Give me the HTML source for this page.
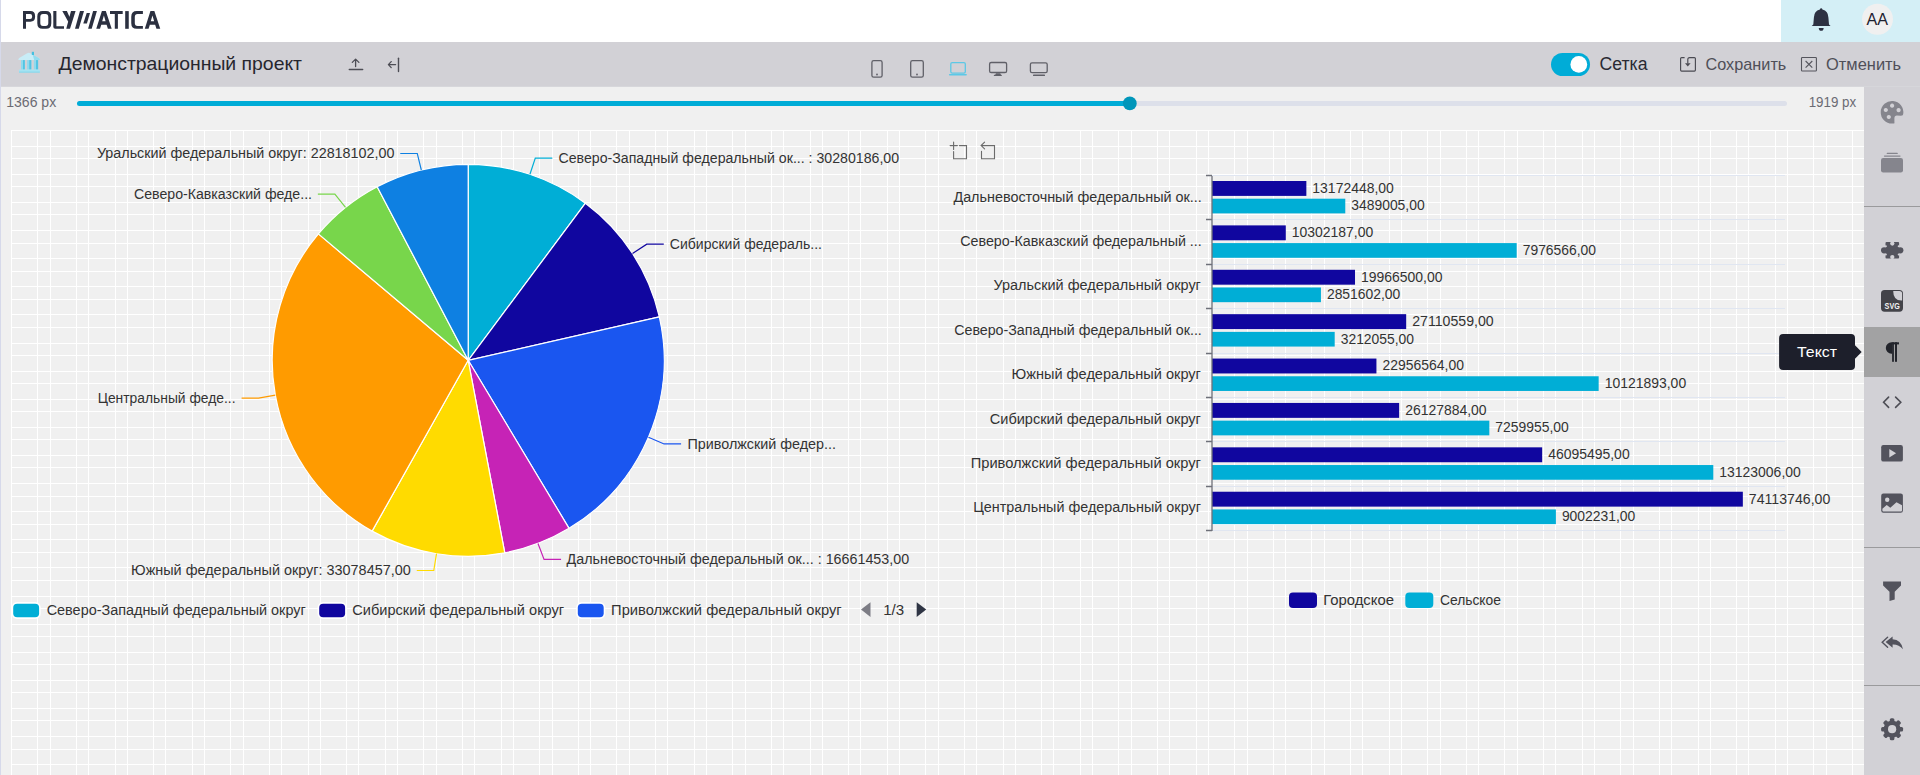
<!DOCTYPE html>
<html><head><meta charset="utf-8"><title>Polymatica</title>
<style>
html,body{margin:0;padding:0;width:1920px;height:775px;overflow:hidden;background:#f0f0f0;font-family:"Liberation Sans", sans-serif;}
svg{position:absolute;left:0;top:0;display:block}
text{font-family:"Liberation Sans", sans-serif;}
</style></head><body>
<svg width="1920" height="775" viewBox="0 0 1920 775">

<rect x="0" y="0" width="1920" height="775" fill="#f0f0f0"/>
<path d="M11.5 130V775M37.5 130V775M50.5 130V775M76.5 130V775M88.5 130V775M115.5 130V775M127.5 130V775M153.5 130V775M165.5 130V775M192.5 130V775M204.5 130V775M230.5 130V775M243.5 130V775M269.5 130V775M281.5 130V775M308.5 130V775M320.5 130V775M346.5 130V775M358.5 130V775M385.5 130V775M397.5 130V775M423.5 130V775M436.5 130V775M462.5 130V775M474.5 130V775M501.5 130V775M513.5 130V775M539.5 130V775M552.5 130V775M578.5 130V775M590.5 130V775M616.5 130V775M629.5 130V775M655.5 130V775M667.5 130V775M694.5 130V775M706.5 130V775M732.5 130V775M745.5 130V775M771.5 130V775M783.5 130V775M810.5 130V775M822.5 130V775M848.5 130V775M860.5 130V775M887.5 130V775M899.5 130V775M925.5 130V775M938.5 130V775M964.5 130V775M976.5 130V775M1003.5 130V775M1015.5 130V775M1041.5 130V775M1053.5 130V775M1080.5 130V775M1092.5 130V775M1118.5 130V775M1131.5 130V775M1157.5 130V775M1169.5 130V775M1196.5 130V775M1208.5 130V775M1234.5 130V775M1247.5 130V775M1273.5 130V775M1285.5 130V775M1311.5 130V775M1324.5 130V775M1350.5 130V775M1362.5 130V775M1389.5 130V775M1401.5 130V775M1427.5 130V775M1440.5 130V775M1466.5 130V775M1478.5 130V775M1504.5 130V775M1517.5 130V775M1543.5 130V775M1555.5 130V775M1582.5 130V775M1594.5 130V775M1620.5 130V775M1633.5 130V775M1659.5 130V775M1671.5 130V775M1698.5 130V775M1710.5 130V775M1736.5 130V775M1748.5 130V775M1775.5 130V775M1787.5 130V775M1813.5 130V775M1826.5 130V775M1852.5 130V775M11 130.5H1864M11 146.5H1864M11 158.5H1864M11 174.5H1864M11 186.5H1864M11 202.5H1864M11 214.5H1864M11 230.5H1864M11 243.5H1864M11 258.5H1864M11 271.5H1864M11 286.5H1864M11 299.5H1864M11 314.5H1864M11 327.5H1864M11 343.5H1864M11 355.5H1864M11 371.5H1864M11 383.5H1864M11 399.5H1864M11 411.5H1864M11 427.5H1864M11 439.5H1864M11 455.5H1864M11 467.5H1864M11 483.5H1864M11 496.5H1864M11 511.5H1864M11 524.5H1864M11 539.5H1864M11 552.5H1864M11 567.5H1864M11 580.5H1864M11 596.5H1864M11 608.5H1864M11 624.5H1864M11 636.5H1864M11 652.5H1864M11 664.5H1864M11 680.5H1864M11 692.5H1864M11 708.5H1864M11 720.5H1864M11 736.5H1864M11 749.5H1864M11 764.5H1864" stroke="#ffffff" stroke-width="1" fill="none" shape-rendering="crispEdges"/>
<rect x="0" y="0" width="1920" height="42" fill="#ffffff"/>
<rect x="1781" y="0" width="139" height="42" fill="#d4eff6"/>
<rect x="0" y="42" width="1920" height="44.8" fill="#d2d1d6"/>
<rect x="1864" y="86.8" width="56" height="775" fill="#d2d1d6"/>
<rect x="0" y="0" width="1" height="775" fill="#d6d9ea"/>
<g fill="#2b3040"><path fill-rule="evenodd" d="M23 28.8V11.1H30.4Q35.1 11.1 35.1 16.2V16.6Q35.1 21.8 30.4 21.8H26V28.8Z M26 13.9V18.9H30.2Q32.1 18.9 32.1 16.9V15.9Q32.1 13.9 30.2 13.9Z"/><path fill-rule="evenodd" d="M42.6 11.1H46Q51.3 11.1 51.3 16.6V23.3Q51.3 28.8 46 28.8H42.6Q37.3 28.8 37.3 23.3V16.6Q37.3 11.1 42.6 11.1Z M43 14H45.6Q48.3 14 48.3 16.9V23.1Q48.3 26 45.6 26H43Q40.3 26 40.3 23.1V16.9Q40.3 14 43 14Z"/><path d="M53.3 11.1H56.4V26.2H64V28.8H55.3Q53.3 28.8 53.3 26.8Z"/><path d="M71 11.1H75.6L70 28.8H66.25Z M62.3 11.1H66.9L70.6 19.6L69.2 23.6Z"/><path d="M80 11.1H84L78.75 28.8H75Z"/><path d="M86.7 13.1H90L86.9 23.5H83.3Z"/><path d="M93.1 11.1H96.9L91.7 28.8H88.1Z"/><path fill-rule="evenodd" d="M96.25 28.8L101.9 11.1H105.8L111.7 28.8H107.9L106.6 24.75H101.3L100.0 28.8Z M102.2 21.2H105.6L103.9 15.5Z"/><path d="M110 11.1H122.7V13.9H117.9V28.8H114.8V13.9H110Z"/><rect x="125.2" y="11.1" width="3.55" height="17.70"/><path d="M142.9 11.1V14H137.6Q134.8 14 134.8 17V23Q134.8 26 137.6 26H142.9V28.8H136.8Q131.25 28.8 131.25 23.2V16.7Q131.25 11.1 136.8 11.1Z"/><path fill-rule="evenodd" d="M144.8 28.8L150.45000000000002 11.1H154.35000000000002L160.25 28.8H156.45000000000002L155.15 24.75H149.85000000000002L148.55 28.8Z M150.75 21.2H154.15L152.45000000000002 15.5Z"/></g>
<g fill="#2d3142"><path d="M1821.2 8.2Q1822.2 8.2 1822.4 9.6Q1828.2 11 1828.4 17.5L1829 24.4L1830.6 26H1811.7L1813.3 24.4L1813.9 17.5Q1814.1 11 1819.9 9.6Q1820.1 8.2 1821.2 8.2Z"/><path d="M1818.7 27.9H1823.7Q1823.4 30.8 1821.2 30.8Q1819 30.8 1818.7 27.9Z"/></g>
<circle cx="1877.5" cy="19.3" r="15.5" fill="#f0f0f0"/>
<text x="1877.3" y="25" font-size="16.5" fill="#1f2230" text-anchor="middle" textLength="21.5" lengthAdjust="spacingAndGlyphs">AA</text>
<g><path d="M18.4 59.2Q18.6 58.4 19.6 57.8L27.2 53.2Q28.7 52.4 30.2 53.2L38.9 57.9Q39.9 58.5 39.9 59.4V60.1H18.4Z" fill="#c8edf7"/><path d="M32.6 54.5L38.9 57.9Q39.9 58.5 39.9 59.4V60.1H34.2Z" fill="#93dcef"/><rect x="31.8" y="51.8" width="2.2" height="3.2" fill="#45c0e0"/><rect x="21" y="60.1" width="3.8" height="9.6" fill="#8fdaee"/><rect x="23" y="60.1" width="1.8" height="9.6" fill="#52c4e3"/><rect x="27.1" y="60.1" width="4.2" height="9.6" fill="#8fdaee"/><rect x="29.3" y="60.1" width="2" height="9.6" fill="#52c4e3"/><rect x="33.8" y="60.1" width="4.3" height="9.6" fill="#8fdaee"/><rect x="36" y="60.1" width="2.1" height="9.6" fill="#52c4e3"/><rect x="19" y="69.6" width="20.9" height="3" rx="0.5" fill="#a6e3f2"/><rect x="19" y="71.6" width="20.9" height="1" fill="#86d6ea"/></g>
<text x="58.5" y="70" font-size="19" fill="#26262e" textLength="243.5" lengthAdjust="spacingAndGlyphs">Демонстрационный проект</text>
<g stroke="#4d4d55" stroke-width="1.3" fill="none" stroke-linecap="round" stroke-linejoin="round"><path d="M355.6 66.6V59.4M352.3 62.4L355.6 59.1L358.9 62.4"/><path d="M349.3 69.4H362.6" stroke-width="1.5"/></g>
<g stroke="#4d4d55" stroke-width="1.3" fill="none" stroke-linecap="round" stroke-linejoin="round"><path d="M395.6 64.6H388.6M391.2 61.6L388.4 64.6L391.2 67.6"/><path d="M398.5 58.3V71.5" stroke-width="1.4"/></g>
<g stroke="#606068" stroke-width="1.3" fill="none"><rect x="871.9" y="60.6" width="10.2" height="16.6" rx="1.8"/><rect x="910.7" y="60.6" width="12.6" height="16.6" rx="1.8"/><rect x="989.6" y="62.5" width="17" height="10" rx="1.6"/><rect x="1030.4" y="62.8" width="16.8" height="9.8" rx="1.6"/></g>
<g fill="#606068"><circle cx="877" cy="74.5" r="0.9"/><circle cx="917" cy="74.5" r="0.9"/><path d="M996 73.2H1000.2L1001 75H995.2Z"/><rect x="993.8" y="74.8" width="8" height="1.3" rx="0.5"/><rect x="1033" y="74.6" width="12" height="1.5" rx="0.6"/></g>
<g stroke="#5cc8e6" stroke-width="1.3" fill="none"><rect x="950.8" y="62.7" width="14.5" height="10.5" rx="1.4"/></g><rect x="948.9" y="74" width="18" height="1.6" rx="0.8" fill="#5cc8e6"/>
<rect x="1551" y="53" width="39" height="23" rx="11.5" fill="#00acd7"/><circle cx="1578.8" cy="64.4" r="8.4" fill="#ffffff"/>
<text x="1599.5" y="69.9" font-size="17.5" fill="#2a2a33" textLength="48" lengthAdjust="spacingAndGlyphs">Сетка</text>
<g stroke="#4a4a52" stroke-width="1.15" fill="none" stroke-linejoin="round"><path d="M1684.6 57.6H1681.6Q1680.6 57.6 1680.6 58.6V70.1Q1680.6 71.1 1681.6 71.1H1694.4Q1695.4 71.1 1695.4 70.1V58.6Q1695.4 57.6 1694.4 57.6H1689.6Q1687.8 57.6 1687.8 59.6V63.4"/></g><path d="M1685 63.2H1690.6L1687.8 66.6Z" fill="#4a4a52"/>
<text x="1705.5" y="69.8" font-size="17" fill="#4f4f58" textLength="80.8" lengthAdjust="spacingAndGlyphs">Сохранить</text>
<g stroke="#55555d" stroke-width="1.1" fill="none"><rect x="1801.5" y="57.5" width="14.9" height="13.5" rx="0.8"/><path d="M1805.6 61L1812.3 67.6M1812.3 61L1805.6 67.6"/></g>
<text x="1826" y="69.8" font-size="17" fill="#4f4f58" textLength="75.2" lengthAdjust="spacingAndGlyphs">Отменить</text>
<text x="6.2" y="107" font-size="14" fill="#6b6b73" textLength="50" lengthAdjust="spacingAndGlyphs">1366 px</text>
<text x="1808.7" y="107" font-size="14" fill="#6b6b73" textLength="47.5" lengthAdjust="spacingAndGlyphs">1919 px</text>
<rect x="77" y="101" width="1710" height="5" rx="2.5" fill="#dde0ea"/>
<rect x="77" y="101" width="1053" height="5" rx="2.5" fill="#00acd7"/>
<circle cx="1129.8" cy="103.4" r="6.9" fill="#0096ba"/>
<rect x="1864" y="327" width="56" height="50" fill="#a2a2a3"/>
<rect x="1864" y="206" width="56" height="1" fill="#9a9a9c"/>
<rect x="1864" y="547" width="56" height="1" fill="#9a9a9c"/>
<rect x="1864" y="685" width="56" height="1" fill="#9a9a9c"/>
<path fill="#85858d" fill-rule="evenodd" d="M1894.2 123.4Q1893.3 123.6 1892.3 123.6A11.3 11.3 0 1 1 1903.2 114Q1903.4 115.8 1901 115.8Q1899 115.6 1896.9 115.6Q1894.4 115.6 1894.4 118.2V121.8Q1894.6 123.3 1894.2 123.4Z M1892.1 103.6a2.1 2.1 0 1 0 0.01 0Z M1885.8 107.9a2.1 2.1 0 1 0 0.01 0Z M1898.6 108a2.1 2.1 0 1 0 0.01 0Z M1888.8 114.9a2.1 2.1 0 1 0 0.01 0Z"/>
<g fill="#85858d"><rect x="1881" y="158" width="22" height="14.4" rx="2.2"/><rect x="1883.9" y="155.4" width="16.7" height="1.3" rx="0.6"/><rect x="1886.7" y="152.7" width="11.1" height="1.3" rx="0.6"/></g>
<g fill="#54545e"><rect x="1885.5" y="242.1" width="13.6" height="16.5" rx="1"/><circle cx="1884.1" cy="250.35" r="3.1"/><circle cx="1900.3" cy="250.35" r="3.1"/></g><g fill="#d2d1d6"><circle cx="1892.3" cy="243.6" r="2.15"/><circle cx="1892.3" cy="257.1" r="2.15"/><circle cx="1885.9" cy="246.3" r="1.0"/><circle cx="1885.9" cy="254.4" r="1.0"/><circle cx="1898.7" cy="246.3" r="1.0"/><circle cx="1898.7" cy="254.4" r="1.0"/></g>
<rect x="1881" y="290" width="22" height="21.7" rx="3.6" fill="#434349"/><path d="M1893.2 290.9H1899.4Q1902.1 290.9 1902.1 293.6V300.4Q1893.2 300.8 1893.2 290.9Z" fill="#d2d1d6"/><text x="1892.2" y="309.3" font-size="8.6" font-weight="bold" fill="#f2f2f2" text-anchor="middle" textLength="15.2" lengthAdjust="spacingAndGlyphs">SVG</text>
<g fill="#22242b"><path d="M1892.2 342.3V353.7H1891.5A5.7 5.7 0 0 1 1891.5 342.3Z"/><rect x="1892.1" y="342.3" width="1.8" height="19.5"/><rect x="1895" y="342.3" width="2" height="19.5"/><rect x="1892.1" y="342.3" width="6.9" height="2.1"/></g>
<path d="M1888.6 397.1L1883.6 402.2L1888.6 407.4M1895.6 397.1L1900.8 402.2L1895.6 407.4" stroke="#4d4d55" stroke-width="1.6" fill="none" stroke-linecap="round" stroke-linejoin="miter"/>
<rect x="1881.2" y="445" width="21.7" height="16.6" rx="2.2" fill="#53535d"/><path d="M1889.3 449L1896.1 453.2L1889.3 457.4Z" fill="#d2d1d6"/>
<rect x="1881.2" y="493.6" width="21.7" height="19.1" rx="2.2" fill="#53535d"/><circle cx="1887.2" cy="499.7" r="2.2" fill="#d2d1d6"/><path d="M1882.4 508.8L1886.7 505.1L1890.3 507.8L1896.5 502.2L1902 505.3V510.6Q1902 511.6 1901 511.6H1883.4Q1882.4 511.6 1882.4 510.6Z" fill="#d2d1d6"/>
<path fill="#53535d" d="M1883.1 581.6H1901V585.5L1894.7 591.8V599.4L1889.5 600.9V591.8L1883.1 585.5Z"/>
<path d="M1887.6 637.3L1882.2 642.2L1887.6 647.3" stroke="#53535d" stroke-width="1.4" fill="none" stroke-linecap="round"/><path fill="#53535d" d="M1885.6 642.1L1892.6 636.6V639.3Q1901.2 639.8 1903 649.2Q1899 644.3 1892.6 644.5V647.8Z"/>
<g fill="#53535d"><circle cx="1892.1" cy="729.2" r="8.5"/><rect x="1889.8" y="718.2" width="4.6" height="6" rx="1.5" transform="rotate(0 1892.1 729.2)"/><rect x="1889.8" y="718.2" width="4.6" height="6" rx="1.5" transform="rotate(45 1892.1 729.2)"/><rect x="1889.8" y="718.2" width="4.6" height="6" rx="1.5" transform="rotate(90 1892.1 729.2)"/><rect x="1889.8" y="718.2" width="4.6" height="6" rx="1.5" transform="rotate(135 1892.1 729.2)"/><rect x="1889.8" y="718.2" width="4.6" height="6" rx="1.5" transform="rotate(180 1892.1 729.2)"/><rect x="1889.8" y="718.2" width="4.6" height="6" rx="1.5" transform="rotate(225 1892.1 729.2)"/><rect x="1889.8" y="718.2" width="4.6" height="6" rx="1.5" transform="rotate(270 1892.1 729.2)"/><rect x="1889.8" y="718.2" width="4.6" height="6" rx="1.5" transform="rotate(315 1892.1 729.2)"/></g><circle cx="1892.1" cy="729.2" r="4.1" fill="#d2d1d6"/>
<g><path d="M468.2 360.3L468.20 164.30A196 196 0 0 1 585.40 203.20Z" fill="#00aed6" stroke="#ffffff" stroke-width="1.2" stroke-linejoin="round"/><path d="M468.2 360.3L585.40 203.20A196 196 0 0 1 659.34 316.93Z" fill="#10069f" stroke="#ffffff" stroke-width="1.2" stroke-linejoin="round"/><path d="M468.2 360.3L659.34 316.93A196 196 0 0 1 569.05 528.36Z" fill="#1a56f0" stroke="#ffffff" stroke-width="1.2" stroke-linejoin="round"/><path d="M468.2 360.3L569.05 528.36A196 196 0 0 1 504.79 552.85Z" fill="#c623b6" stroke="#ffffff" stroke-width="1.2" stroke-linejoin="round"/><path d="M468.2 360.3L504.79 552.85A196 196 0 0 1 372.11 531.13Z" fill="#ffdb00" stroke="#ffffff" stroke-width="1.2" stroke-linejoin="round"/><path d="M468.2 360.3L372.11 531.13A196 196 0 0 1 318.40 233.90Z" fill="#ff9b00" stroke="#ffffff" stroke-width="1.2" stroke-linejoin="round"/><path d="M468.2 360.3L318.40 233.90A196 196 0 0 1 377.17 186.72Z" fill="#78d64b" stroke="#ffffff" stroke-width="1.2" stroke-linejoin="round"/><path d="M468.2 360.3L377.17 186.72A196 196 0 0 1 468.20 164.30Z" fill="#0e80e2" stroke="#ffffff" stroke-width="1.2" stroke-linejoin="round"/></g>
<g><path d="M529.94 174.28L535.30 158.14L552.30 158.14" stroke="#00aed6" stroke-width="1.2" fill="none"/><text x="558.50" y="163.09" font-size="15.3" fill="#333333" textLength="340.60" lengthAdjust="spacingAndGlyphs">Северо-Западный федеральный ок... : 30280186,00</text><path d="M632.52 253.46L646.77 244.20L663.77 244.20" stroke="#10069f" stroke-width="1.2" fill="none"/><text x="669.80" y="249.15" font-size="15.3" fill="#333333" textLength="152.17" lengthAdjust="spacingAndGlyphs">Сибирский федераль...</text><path d="M648.45 437.28L664.09 443.95L681.09 443.95" stroke="#1a56f0" stroke-width="1.2" fill="none"/><text x="687.50" y="448.90" font-size="15.3" fill="#333333" textLength="148.49" lengthAdjust="spacingAndGlyphs">Приволжский федер...</text><path d="M538.00 543.45L544.06 559.34L561.06 559.34" stroke="#c623b6" stroke-width="1.2" fill="none"/><text x="566.60" y="564.29" font-size="15.3" fill="#333333" textLength="342.57" lengthAdjust="spacingAndGlyphs">Дальневосточный федеральный ок... : 16661453,00</text><path d="M436.53 553.72L433.78 570.50L416.78 570.50" stroke="#ffdb00" stroke-width="1.2" fill="none"/><text x="131.10" y="575.45" font-size="15.3" fill="#333333" textLength="279.62" lengthAdjust="spacingAndGlyphs">Южный федеральный округ: 33078457,00</text><path d="M275.32 395.15L258.59 398.17L241.59 398.17" stroke="#ff9b00" stroke-width="1.2" fill="none"/><text x="97.70" y="403.12" font-size="15.3" fill="#333333" textLength="137.81" lengthAdjust="spacingAndGlyphs">Центральный феде...</text><path d="M345.50 207.46L334.86 194.20L317.86 194.20" stroke="#78d64b" stroke-width="1.2" fill="none"/><text x="134.00" y="199.15" font-size="15.3" fill="#333333" textLength="177.99" lengthAdjust="spacingAndGlyphs">Северо-Кавказский феде...</text><path d="M421.33 169.99L417.26 153.48L400.26 153.48" stroke="#0e80e2" stroke-width="1.2" fill="none"/><text x="96.90" y="158.43" font-size="15.3" fill="#333333" textLength="297.49" lengthAdjust="spacingAndGlyphs">Уральский федеральный округ: 22818102,00</text></g>
<rect x="11.6" y="602.1" width="29.1" height="16.8" rx="5.5" fill="#ffffff"/>
<rect x="13.2" y="603.7" width="25.9" height="13.6" rx="4" fill="#00aed6"/>
<text x="46.70" y="614.80" font-size="15.3" fill="#333333" textLength="259.07" lengthAdjust="spacingAndGlyphs">Северо-Западный федеральный округ</text>
<rect x="317.59999999999997" y="602.1" width="29.1" height="16.8" rx="5.5" fill="#ffffff"/>
<rect x="319.2" y="603.7" width="25.9" height="13.6" rx="4" fill="#10069f"/>
<text x="352.30" y="614.80" font-size="15.3" fill="#333333" textLength="211.80" lengthAdjust="spacingAndGlyphs">Сибирский федеральный округ</text>
<rect x="576.1999999999999" y="602.1" width="29.1" height="16.8" rx="5.5" fill="#ffffff"/>
<rect x="577.8" y="603.7" width="25.9" height="13.6" rx="4" fill="#1a56f0"/>
<text x="611.10" y="614.80" font-size="15.3" fill="#333333" textLength="230.53" lengthAdjust="spacingAndGlyphs">Приволжский федеральный округ</text>
<path d="M861 609.6L870.5 602.3V617Z" fill="#7d7d85"/>
<path d="M926.2 609.6L916.7 602.3V617Z" fill="#2f3544"/>
<text x="883.20" y="614.80" font-size="15.3" fill="#333333" textLength="21.00" lengthAdjust="spacingAndGlyphs">1/3</text>
<g stroke="#6b6b6b" stroke-width="1.1" fill="none" stroke-linecap="round" stroke-linejoin="miter"><path d="M953.6 142.1V149.4M950.1 145.6H957.4M959.4 145.6H966.5V158.7H953.6V151.5"/><path d="M984.6 142.2L981.1 145.6L984.6 148.8M981.2 145.6H994.5V158.7H981.5V151.3"/></g>
<g><path d="M1212.0 175.5H1785" stroke="#e0e6f1" stroke-width="1"/><path d="M1212.0 219.5H1785" stroke="#e0e6f1" stroke-width="1"/><path d="M1212.0 264.5H1785" stroke="#e0e6f1" stroke-width="1"/><path d="M1212.0 308.5H1785" stroke="#e0e6f1" stroke-width="1"/><path d="M1212.0 353.5H1785" stroke="#e0e6f1" stroke-width="1"/><path d="M1212.0 397.5H1785" stroke="#e0e6f1" stroke-width="1"/><path d="M1212.0 441.5H1785" stroke="#e0e6f1" stroke-width="1"/><path d="M1212.0 486.5H1785" stroke="#e0e6f1" stroke-width="1"/><rect x="1212.0" y="181.00" width="94.35" height="14.9" fill="#10069f"/><rect x="1212.0" y="198.70" width="133.28" height="14.7" fill="#00aed6"/><text x="1312.35" y="192.85" font-size="15.3" fill="#333333" textLength="81.49" lengthAdjust="spacingAndGlyphs">13172448,00</text><text x="1351.28" y="210.45" font-size="15.3" fill="#333333" textLength="73.38" lengthAdjust="spacingAndGlyphs">3489005,00</text><text x="953.40" y="201.69" font-size="15.3" fill="#333333" textLength="248.40" lengthAdjust="spacingAndGlyphs">Дальневосточный федеральный ок...</text><rect x="1212.0" y="225.39" width="73.79" height="14.9" fill="#10069f"/><rect x="1212.0" y="243.09" width="304.70" height="14.7" fill="#00aed6"/><text x="1291.79" y="237.24" font-size="15.3" fill="#333333" textLength="81.49" lengthAdjust="spacingAndGlyphs">10302187,00</text><text x="1522.70" y="254.84" font-size="15.3" fill="#333333" textLength="73.38" lengthAdjust="spacingAndGlyphs">7976566,00</text><text x="960.20" y="246.08" font-size="15.3" fill="#333333" textLength="241.58" lengthAdjust="spacingAndGlyphs">Северо-Кавказский федеральный ...</text><rect x="1212.0" y="269.78" width="143.01" height="14.9" fill="#10069f"/><rect x="1212.0" y="287.48" width="108.93" height="14.7" fill="#00aed6"/><text x="1361.01" y="281.63" font-size="15.3" fill="#333333" textLength="81.49" lengthAdjust="spacingAndGlyphs">19966500,00</text><text x="1326.93" y="299.23" font-size="15.3" fill="#333333" textLength="73.38" lengthAdjust="spacingAndGlyphs">2851602,00</text><text x="993.40" y="290.47" font-size="15.3" fill="#333333" textLength="207.49" lengthAdjust="spacingAndGlyphs">Уральский федеральный округ</text><rect x="1212.0" y="314.17" width="194.18" height="14.9" fill="#10069f"/><rect x="1212.0" y="331.87" width="122.70" height="14.7" fill="#00aed6"/><text x="1412.18" y="326.02" font-size="15.3" fill="#333333" textLength="81.50" lengthAdjust="spacingAndGlyphs">27110559,00</text><text x="1340.70" y="343.62" font-size="15.3" fill="#333333" textLength="73.38" lengthAdjust="spacingAndGlyphs">3212055,00</text><text x="954.20" y="334.87" font-size="15.3" fill="#333333" textLength="247.62" lengthAdjust="spacingAndGlyphs">Северо-Западный федеральный ок...</text><rect x="1212.0" y="358.56" width="164.43" height="14.9" fill="#10069f"/><rect x="1212.0" y="376.26" width="386.66" height="14.7" fill="#00aed6"/><text x="1382.43" y="370.41" font-size="15.3" fill="#333333" textLength="81.49" lengthAdjust="spacingAndGlyphs">22956564,00</text><text x="1604.66" y="388.01" font-size="15.3" fill="#333333" textLength="81.49" lengthAdjust="spacingAndGlyphs">10121893,00</text><text x="1011.50" y="379.25" font-size="15.3" fill="#333333" textLength="189.41" lengthAdjust="spacingAndGlyphs">Южный федеральный округ</text><rect x="1212.0" y="402.95" width="187.14" height="14.9" fill="#10069f"/><rect x="1212.0" y="420.65" width="277.33" height="14.7" fill="#00aed6"/><text x="1405.14" y="414.80" font-size="15.3" fill="#333333" textLength="81.49" lengthAdjust="spacingAndGlyphs">26127884,00</text><text x="1495.33" y="432.40" font-size="15.3" fill="#333333" textLength="73.38" lengthAdjust="spacingAndGlyphs">7259955,00</text><text x="989.80" y="423.64" font-size="15.3" fill="#333333" textLength="211.10" lengthAdjust="spacingAndGlyphs">Сибирский федеральный округ</text><rect x="1212.0" y="447.34" width="330.16" height="14.9" fill="#10069f"/><rect x="1212.0" y="465.04" width="501.30" height="14.7" fill="#00aed6"/><text x="1548.16" y="459.19" font-size="15.3" fill="#333333" textLength="81.49" lengthAdjust="spacingAndGlyphs">46095495,00</text><text x="1719.30" y="476.79" font-size="15.3" fill="#333333" textLength="81.49" lengthAdjust="spacingAndGlyphs">13123006,00</text><text x="970.70" y="468.04" font-size="15.3" fill="#333333" textLength="230.23" lengthAdjust="spacingAndGlyphs">Приволжский федеральный округ</text><rect x="1212.0" y="491.73" width="530.84" height="14.9" fill="#10069f"/><rect x="1212.0" y="509.43" width="343.89" height="14.7" fill="#00aed6"/><text x="1748.84" y="503.58" font-size="15.3" fill="#333333" textLength="81.50" lengthAdjust="spacingAndGlyphs">74113746,00</text><text x="1561.89" y="521.18" font-size="15.3" fill="#333333" textLength="73.38" lengthAdjust="spacingAndGlyphs">9002231,00</text><text x="973.20" y="512.42" font-size="15.3" fill="#333333" textLength="227.70" lengthAdjust="spacingAndGlyphs">Центральный федеральный округ</text><path d="M1212.0 530.5H1785" stroke="#e0e6f1" stroke-width="1"/><path d="M1212.0 176V531.0M1206 175.5H1212.0M1206 219.5H1212.0M1206 264.5H1212.0M1206 308.5H1212.0M1206 353.5H1212.0M1206 397.5H1212.0M1206 441.5H1212.0M1206 486.5H1212.0M1206 530.5H1212.0" stroke="#6e7079" stroke-width="1.3" fill="none"/></g>
<rect x="1289" y="592.5" width="28" height="15.6" rx="4" fill="#10069f"/>
<text x="1323.20" y="605.00" font-size="15.3" fill="#333333" textLength="70.81" lengthAdjust="spacingAndGlyphs">Городское</text>
<rect x="1405.3" y="592.5" width="28" height="15.6" rx="4" fill="#00aed6"/>
<text x="1439.90" y="605.00" font-size="15.3" fill="#333333" textLength="61.11" lengthAdjust="spacingAndGlyphs">Сельское</text>
<path d="M1783.1 334H1851Q1855 334 1855 338V345.3L1861.7 352L1855 358.7V366Q1855 370 1851 370H1783.1Q1779.1 370 1779.1 366V338Q1779.1 334 1783.1 334Z" fill="#1d1f2b"/>
<text x="1817" y="357.2" font-size="15.4" fill="#ffffff" text-anchor="middle" textLength="40" lengthAdjust="spacingAndGlyphs">Текст</text>
</svg></body></html>
